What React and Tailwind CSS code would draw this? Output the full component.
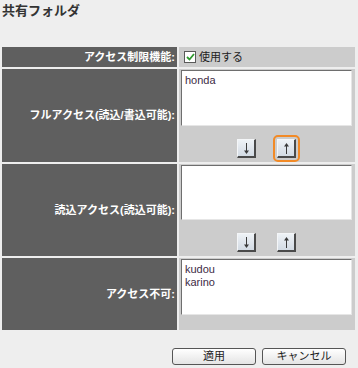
import React from 'react';

const font = { fontFamily: '"Liberation Sans", "Noto Sans CJK JP", sans-serif' };

const ArrowButton = ({ dir, focused }) => {
  const btn = (
    <div className="w-[19px] h-[19px] bg-gradient-to-b from-[#eef2f6] to-[#d3dbe4] border-t border-l border-[#f4f6f8] border-r-2 border-b-2 border-r-[#4a4a4a] border-b-[#4a4a4a] flex items-center justify-center">
      <svg width="9" height="13" viewBox="0 0 9 13">
        {dir === 'down' ? (
          <>
            <line x1="4.5" y1="1" x2="4.5" y2="10" stroke="#3a3a3a" strokeWidth="1" />
            <path d="M2 8.5 L4.5 12 L7 8.5 Z" fill="#3a3a3a" />
          </>
        ) : (
          <>
            <line x1="4.5" y1="3" x2="4.5" y2="12" stroke="#3a3a3a" strokeWidth="1" />
            <path d="M2 4.5 L4.5 1 L7 4.5 Z" fill="#3a3a3a" />
          </>
        )}
      </svg>
    </div>
  );
  if (focused) {
    return <div className="border-2 border-[#f28a26] rounded-[5px] p-[2px]">{btn}</div>;
  }
  return <div className="p-[4px]">{btn}</div>;
};

const ListBox = ({ items }) => (
  <div className="h-[56px] bg-white border-t border-l border-[#6e6e6e] border-r border-b border-r-[#e6e6e6] border-b-[#e6e6e6] px-[3px] pt-[3px] text-[11px] leading-[13px] text-[#3d2b45]">
    {items.map((i) => (
      <div key={i}>{i}</div>
    ))}
  </div>
);

const Label = ({ children }) => (
  <div className="bg-[#5f5f5f] flex items-center justify-end pr-[2px] text-white font-bold text-[11px] leading-none">
    {children}
  </div>
);

export default function App() {
  return (
    <div className="w-[358px] h-[368px] bg-[#eeeeee] flex flex-col" style={font}>
      <div className="pl-[2px] pt-[2px] h-[47px] text-[13px] font-semibold text-[#333] leading-[17px]">共有フォルダ</div>

      <div className="ml-[2px] w-[353px] grid grid-cols-[175px_176px] grid-rows-[20px_93px_92px_72px] gap-[2px]">
        <Label>アクセス制限機能:</Label>
        <div className="bg-[#cccccc] flex items-center pl-[5px] gap-[3px]">
          <div className="w-[12px] h-[12px] bg-white border border-[#5a5a5a] flex items-center justify-center">
            <svg width="9" height="8" viewBox="0 0 9 8">
              <path d="M1 4 L3.5 6.5 L8 1" stroke="#2f9a2f" strokeWidth="1.8" fill="none" />
            </svg>
          </div>
          <span className="text-[11px] text-[#222]">使用する</span>
        </div>

        <Label>フルアクセス(読込/書込可能):</Label>
        <div className="bg-[#cccccc] pl-[2px] pr-[3px] pt-[1px] flex flex-col">
          <ListBox items={['honda']} />
          <div className="flex justify-center gap-[13px] mt-[9px]">
            <ArrowButton dir="down" />
            <ArrowButton dir="up" focused />
          </div>
        </div>

        <Label>読込アクセス(読込可能):</Label>
        <div className="bg-[#cccccc] pl-[2px] pr-[3px] pt-[1px] flex flex-col">
          <ListBox items={[]} />
          <div className="flex justify-center gap-[13px] mt-[9px]">
            <ArrowButton dir="down" />
            <ArrowButton dir="up" />
          </div>
        </div>

        <Label>アクセス不可:</Label>
        <div className="bg-[#cccccc] pl-[2px] pr-[3px] pt-[1px]">
          <ListBox items={['kudou', 'karino']} />
        </div>
      </div>

      <div className="flex justify-end gap-[6px] pr-[12px] mt-[18px]">
        <button className="w-[84px] h-[17px] rounded-[3px] border border-[#555] bg-gradient-to-b from-white to-[#e4e4e4] text-[11px] leading-none text-[#222]">
          適用
        </button>
        <button className="w-[84px] h-[17px] rounded-[3px] border border-[#555] bg-gradient-to-b from-white to-[#e4e4e4] text-[11px] leading-none text-[#222]">
          キャンセル
        </button>
      </div>
    </div>
  );
}
